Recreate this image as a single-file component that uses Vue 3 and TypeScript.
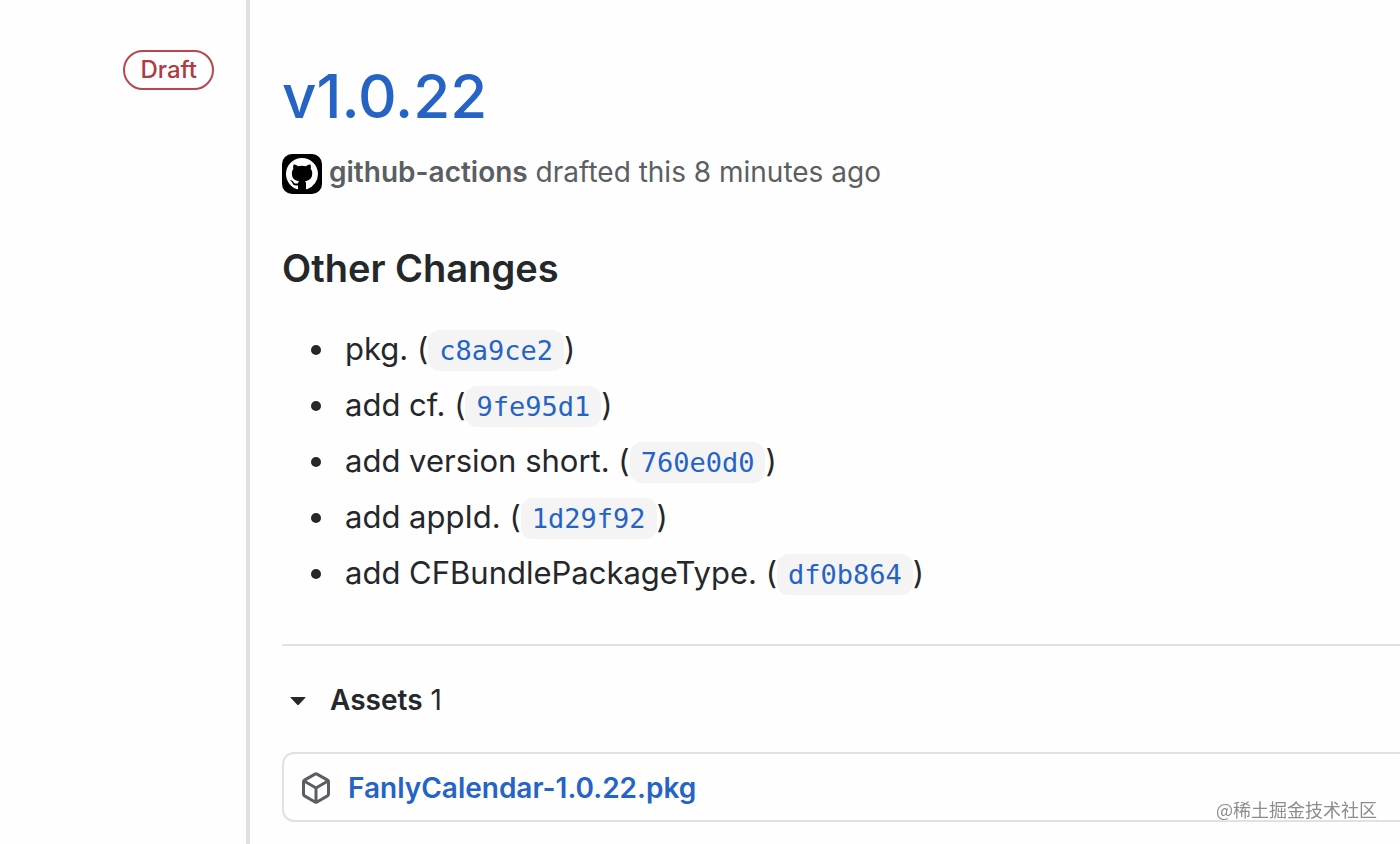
<script setup lang="ts">
import { ref } from 'vue'

interface Change {
  text: string
  sha: string
}

const version = 'v1.0.22'
const changes: Change[] = [
  { text: 'pkg.', sha: 'c8a9ce2' },
  { text: 'add cf.', sha: '9fe95d1' },
  { text: 'add version short.', sha: '760e0d0' },
  { text: 'add appId.', sha: '1d29f92' },
  { text: 'add CFBundlePackageType.', sha: 'df0b864' },
]
const assets: string[] = ['FanlyCalendar-1.0.22.pkg']
const open = ref(true)
</script>

<template>
  <div class="release">
    <aside class="side">
      <span class="draft">Draft</span>
    </aside>
    <main class="content">
      <h1 class="title"><a href="#">{{ version }}</a></h1>
      <p class="byline">
        <svg class="avatar" viewBox="0 0 40 40" aria-hidden="true">
          <rect width="40" height="40" rx="10" fill="#000" />
          <path
            transform="translate(4 4)"
            fill="#fff"
            fill-rule="evenodd"
            d="M16 0C7.16 0 0 7.16 0 16c0 7.08 4.58 13.06 10.94 15.18.8.14 1.1-.34 1.1-.76 0-.38-.02-1.64-.02-2.98-4.02.74-5.06-.98-5.38-1.88-.18-.46-.96-1.88-1.64-2.26-.56-.3-1.36-1.04-.02-1.06 1.26-.02 2.16 1.16 2.46 1.64 1.44 2.42 3.74 1.74 4.66 1.32.14-1.04.56-1.74 1.02-2.14-3.56-.4-7.28-1.78-7.28-7.9 0-1.74.62-3.18 1.64-4.3-.16-.4-.72-2.04.16-4.24 0 0 1.34-.42 4.4 1.64 1.28-.36 2.64-.54 4-.54s2.72.18 4 .54c3.06-2.08 4.4-1.64 4.4-1.64.88 2.2.32 3.84.16 4.24 1.02 1.12 1.64 2.54 1.64 4.3 0 6.14-3.74 7.5-7.3 7.9.58.5 1.08 1.46 1.08 2.96 0 2.14-.02 3.86-.02 4.4 0 .42.3.92 1.1.76A16.01 16.01 0 0 0 32 16C32 7.16 24.84 0 16 0z"
          />
        </svg>
        <span><a class="author" href="#">github-actions</a> drafted this 8 minutes ago</span>
      </p>

      <h3 class="heading">Other Changes</h3>
      <ul class="changes">
        <li v-for="change in changes" :key="change.sha">
          {{ change.text }} (<a href="#"><code>{{ change.sha }}</code></a>)
        </li>
      </ul>

      <section class="assets">
        <button class="toggle" type="button" :aria-expanded="open" @click="open = !open">
          <svg class="caret" :class="{ closed: !open }" viewBox="0 0 32 32" aria-hidden="true">
            <path d="M9 13h14a.5.5 0 0 1 .35.85l-6.6 6.9a1 1 0 0 1-1.5 0l-6.6-6.9a.5.5 0 0 1 .35-.85z" />
          </svg>
          <span><b>Assets</b> {{ assets.length }}</span>
        </button>
        <ul v-if="open" class="files">
          <li v-for="file in assets" :key="file">
            <svg class="package" viewBox="0 0 16 16" aria-hidden="true">
              <path
                fill-rule="evenodd"
                d="M8.878.392a1.75 1.75 0 0 0-1.756 0l-5.25 3.045A1.75 1.75 0 0 0 1 4.951v6.098c0 .624.332 1.2.872 1.514l5.25 3.045a1.75 1.75 0 0 0 1.756 0l5.25-3.045c.54-.313.872-.89.872-1.514V4.951c0-.624-.332-1.2-.872-1.514L8.878.392zM7.875 1.69a.25.25 0 0 1 .25 0l4.63 2.685L8 7.133 3.245 4.375l4.63-2.685zM2.5 5.677v5.372c0 .09.047.171.125.216l4.625 2.683V8.432L2.5 5.677zm6.25 8.271 4.625-2.683a.25.25 0 0 0 .125-.216V5.677L8.75 8.432v5.516z"
              />
            </svg>
            <a href="#">{{ file }}</a>
          </li>
        </ul>
      </section>
    </main>
    <div class="watermark">@稀土掘金技术社区</div>
  </div>
</template>

<style>
body {
  background: #fefefe;
  overflow: hidden;
}
</style>

<style scoped>
.release {
  display: grid;
  grid-template-columns: 246px minmax(0, 1fr);
  min-height: 100vh;
  color: #25282b;
  font-family: Inter, "Liberation Sans", "Noto Sans CJK SC", sans-serif;
}
a {
  color: #2563c4;
  text-decoration: none;
}
.side {
  display: flex;
  justify-content: flex-end;
  align-items: flex-start;
  padding: 50px 32px 0 0;
}
.draft {
  padding: 0 15px;
  border: 2px solid #b5474d;
  border-radius: 20px;
  color: #b03a3f;
  font-size: 24px;
  font-weight: 500;
  line-height: 36px;
}
.content {
  border-left: 4px solid #e1e1e2;
  padding: 48px 0 20px 32px;
}
.title {
  margin: 0;
  font-size: 60px;
  font-weight: 500;
  line-height: 96px;
}
.byline {
  display: flex;
  align-items: flex-start;
  gap: 7px;
  margin: 10px 0 0;
  color: #5b5f63;
  font-size: 28px;
  line-height: 36px;
}
.avatar {
  width: 40px;
  height: 40px;
}
.author {
  color: inherit;
  font-weight: 600;
}
.heading {
  margin: 49px 0 0;
  font-size: 38px;
  font-weight: 600;
  line-height: 50px;
}
.changes {
  margin: 28px 0 0;
  padding: 0 0 0 56px;
  font-size: 31px;
  line-height: 56px;
}
.changes li {
  height: 56px;
  padding-left: 7px;
}
code {
  padding: 5px 11px;
  border-radius: 12px;
  background: #f4f4f4;
  font-family: "DejaVu Sans Mono", monospace;
  font-size: 27px;
}
.assets {
  margin-top: 43px;
  padding-top: 32px;
  border-top: 2px solid #e1e1e2;
}
.toggle {
  display: flex;
  align-items: center;
  gap: 16px;
  padding: 0;
  border: 0;
  background: none;
  color: inherit;
  font: inherit;
  font-size: 28px;
  line-height: 44px;
}
.toggle b {
  font-weight: 600;
}
.caret {
  width: 32px;
  height: 32px;
  fill: currentColor;
}
.caret.closed {
  transform: rotate(-90deg);
}
.files {
  margin: 30px -20px 0 0;
  padding: 0;
  border: 2px solid #e1e1e2;
  border-radius: 12px;
  list-style: none;
}
.files li {
  display: flex;
  align-items: center;
  gap: 16px;
  padding: 12px 16px 10px;
  font-size: 28px;
  font-weight: 600;
  line-height: 44px;
}
.package {
  width: 32px;
  height: 32px;
  fill: #5b5f63;
}
.watermark {
  position: fixed;
  right: 23px;
  bottom: 22px;
  color: #8c8c8c;
  font-family: "Noto Sans CJK SC", sans-serif;
  font-size: 18px;
  line-height: 26px;
  text-shadow: 0 0 2px #fff;
}
</style>
